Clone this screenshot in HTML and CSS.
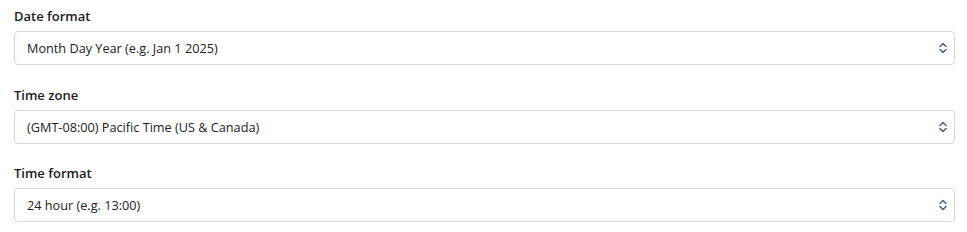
FILE: index.html
```html
<!DOCTYPE html>
<html lang="en">
<head>
    <meta charset="UTF-8">
    <meta name="viewport" content="width=device-width, initial-scale=1.0">
    <title>Regional settings</title>
    <link rel="stylesheet" href="styles.css">
</head>
<body>

<form class="settings">
    <div class="campo">
        <label for="dateFormat">Date format</label>
        <div class="select-wrap">
            <select id="dateFormat">
                <option>Month Day Year (e.g. Jan 1 2025)</option>
                <option>Day Month Year (e.g. 1 Jan 2025)</option>
                <option>Year Month Day (e.g. 2025 Jan 1)</option>
            </select>
            <svg class="seta" width="8" height="12" viewBox="0 0 8 12"><path d="M1 4.5 L4 1.5 L7 4.5 M1 7.5 L4 10.5 L7 7.5" fill="none" stroke="#56657a" stroke-width="1.6" stroke-linecap="round" stroke-linejoin="round"/></svg>
        </div>
    </div>

    <div class="campo">
        <label for="timeZone">Time zone</label>
        <div class="select-wrap">
            <select id="timeZone">
                <option>(GMT-08:00) Pacific Time (US &amp; Canada)</option>
                <option>(GMT-05:00) Eastern Time (US &amp; Canada)</option>
                <option>(GMT+00:00) UTC</option>
            </select>
            <svg class="seta" width="8" height="12" viewBox="0 0 8 12"><path d="M1 4.5 L4 1.5 L7 4.5 M1 7.5 L4 10.5 L7 7.5" fill="none" stroke="#56657a" stroke-width="1.6" stroke-linecap="round" stroke-linejoin="round"/></svg>
        </div>
    </div>

    <div class="campo">
        <label for="timeFormat">Time format</label>
        <div class="select-wrap">
            <select id="timeFormat">
                <option>24 hour (e.g. 13:00)</option>
                <option>12 hour (e.g. 1:00 PM)</option>
            </select>
            <svg class="seta" width="8" height="12" viewBox="0 0 8 12"><path d="M1 4.5 L4 1.5 L7 4.5 M1 7.5 L4 10.5 L7 7.5" fill="none" stroke="#56657a" stroke-width="1.6" stroke-linecap="round" stroke-linejoin="round"/></svg>
        </div>
    </div>
</form>

</body>
</html>
```

FILE: styles.css
```css
body {
    margin: 0;
    padding: 7px 12px 0 14px;
    background-color: #fff;
    font-family: "Open Sans", Arial, sans-serif;
    color: #222;
}
.campo {
    margin-bottom: 20.5px;
}
.campo:last-child {
    margin-bottom: 0;
}
label {
    display: block;
    font-size: 13px;
    font-weight: 600;
    line-height: 18px;
    color: #1b1b1b;
    margin-bottom: 6px;
}
.select-wrap {
    position: relative;
}
select {
    display: block;
    width: 100%;
    height: 34px;
    padding: 0 30px 0 12px;
    font-family: inherit;
    font-size: 12.7px;
    color: #222;
    background-color: #fff;
    border: 1px solid #d3d6da;
    border-radius: 4px;
    appearance: none;
    -webkit-appearance: none;
    outline: none;
}
.seta {
    position: absolute;
    right: 8px;
    top: 11px;
    pointer-events: none;
}
```
